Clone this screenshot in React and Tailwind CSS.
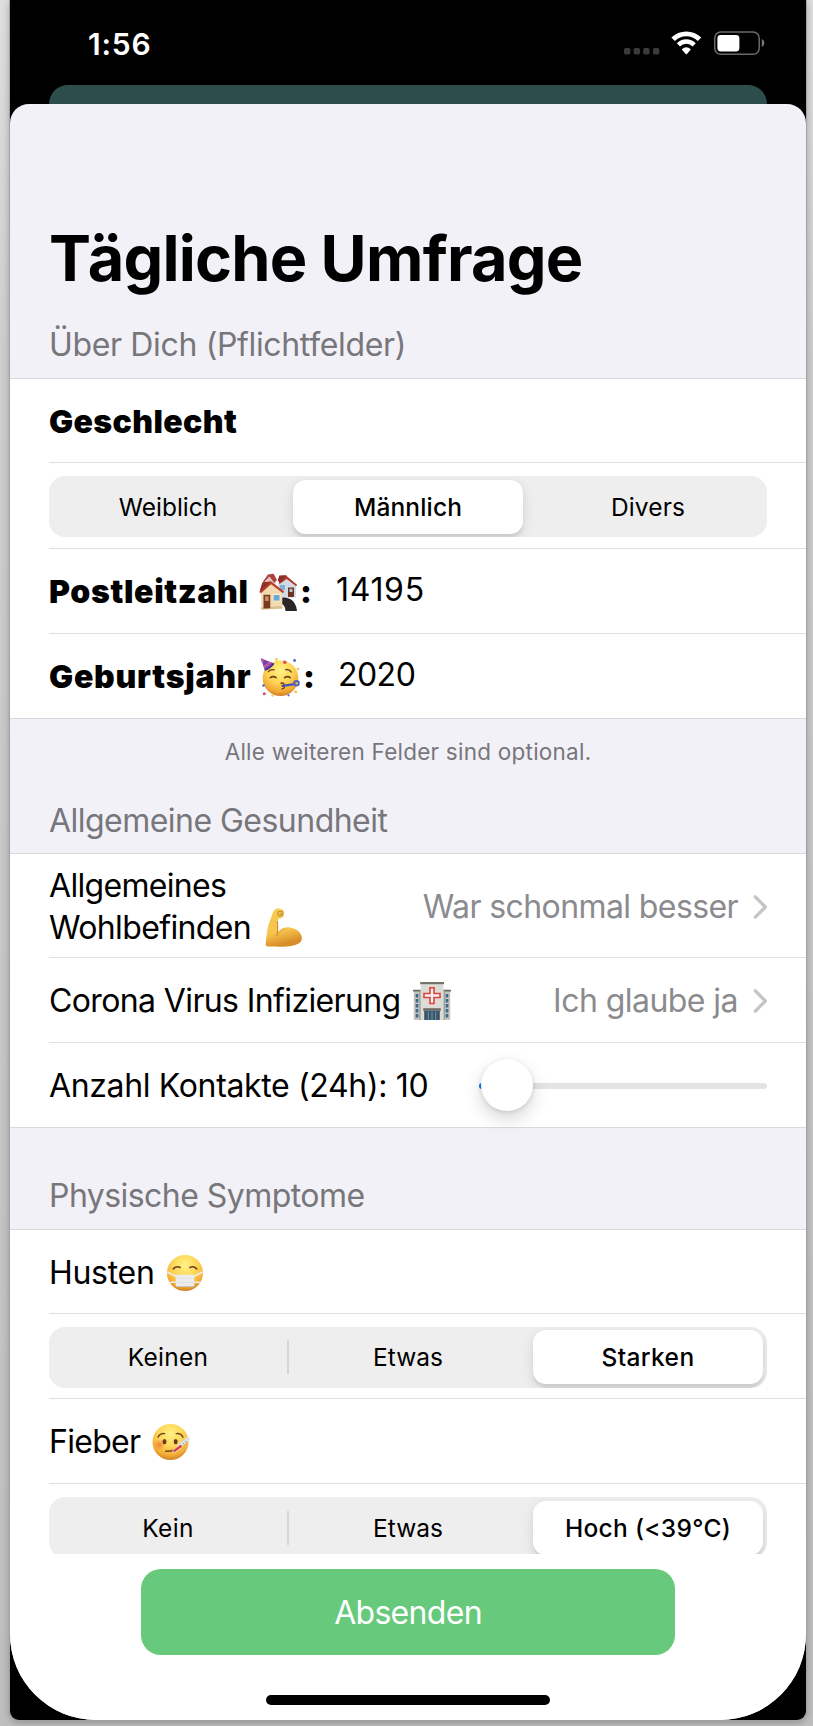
import clsx from "clsx";

/* ---------- Status bar ---------- */

function StatusIcons() {
  return (
    <svg width="160" height="45" viewBox="0 0 160 45" fill="none">
      <g fill="#3b3b3b">
        <rect x="14" y="28" width="6.4" height="6.5" rx="1.8" />
        <rect x="23.6" y="28" width="6.4" height="6.5" rx="1.8" />
        <rect x="33.2" y="28" width="6.4" height="6.5" rx="1.8" />
        <rect x="42.9" y="28" width="6.4" height="6.5" rx="1.8" />
      </g>
      <path d="M63.1 19.3a18.7 18.7 0 0 1 26.4 0" stroke="#fff" strokeWidth="4.9" />
      <path d="M68.4 24.8a11.2 11.2 0 0 1 15.8 0" stroke="#fff" strokeWidth="4.5" />
      <path d="M72.2 28.9a5.8 5.8 0 0 1 8.2 0 .9.9 0 0 1 0 1.2l-3.5 3.9a.8.8 0 0 1-1.2 0l-3.5-3.9a.9.9 0 0 1 0-1.2z" fill="#fff" />
      <rect x="104.7" y="12" width="44.5" height="22.2" rx="6" stroke="#6a6a6a" strokeWidth="1.5" />
      <rect x="107.4" y="15" width="22" height="16.4" rx="3.4" fill="#fff" />
      <path d="M151.8 19v8c1.6-.7 2.5-2.2 2.5-4s-.9-3.3-2.5-4z" fill="#777" />
    </svg>
  );
}

/* ---------- Emoji drawings ---------- */

function Houses({ className }) {
  return (
    <svg className={className} viewBox="0 0 38 40">
      <path d="M5 9h12v12H5z" fill="#ead9d6" />
      <path d="M7.5 11h4v5h-4z" fill="#9db8cf" />
      <path d="M4 9.6 9 2.4l5.6-.6L18 8l-3 3-5-6-5 5.500z" fill="#a8423a" />
      <path d="M10.500 4.500 6 10.500h9z" fill="#e2c4be" />
      <path d="M19 12 28.500 5 37 12v13.500H19z" fill="#d3dae4" />
      <path d="M21 13h5v5h-5z" fill="#7fb0d8" />
      <path d="M29 15.500h6V25h-6z" fill="#6f3220" />
      <path d="M30.500 16.800h3v3.200h-3z" fill="#a9c9dd" />
      <path d="m27 3.500 11 9.200-.8 1.500-9.500-7.200-7.200 5-1.600-4.600L20.500 4z" fill="#b0372b" />
      <path d="m20.400 3.400 7.400-.1-6.600 7.400-2.300-2z" fill="#8d3128" />
      <path d="M22.500 25.800c8.500-1.200 14.600 3.700 15.500 13.200H26.500c-.3-4-1.600-6.200-4-7z" fill="#2b2526" />
      <path d="M2.200 20.500 12 11l11.300 9.500V37L2.200 37.600z" fill="#f2dbb1" />
      <path d="M2.200 35.200 23.300 34v2.600l-21.100 1z" fill="#d9c092" />
      <path d="M4.500 22.800h6.800v13.400l-6.800.4z" fill="#7b3a1f" />
      <path d="M6 24.300h3.700v4.600H6z" fill="#c9936a" />
      <path d="M13.800 22.200h7.600v7.200h-7.600z" fill="#fff3d8" />
      <path d="M14.600 23h6v5.600h-6z" fill="#6aa7d9" />
      <path d="m12.200 9.600 13 9.900-1.200 1.700L12 12.300 2 21.300.500 20.200 3.300 11.200z" fill="#bd3d2d" />
      <path d="m3.400 10.300 8.800-.9L.6 20.100z" fill="#8f3127" />
    </svg>
  );
}

function FaceGradient({ id }) {
  return (
    <radialGradient id={id} cx="50%" cy="28%" r="72%">
      <stop offset="0" stopColor="#fff287" />
      <stop offset="0.5" stopColor="#fdd455" />
      <stop offset="0.82" stopColor="#f3ab34" />
      <stop offset="1" stopColor="#cf8126" />
    </radialGradient>
  );
}

function PartyFace({ className }) {
  return (
    <svg className={className} viewBox="0 0 40 40">
      <defs><FaceGradient id="faceParty" /></defs>
      <circle cx="20.500" cy="21.200" r="17.800" fill="url(#faceParty)" />
      <path d="M.800 1.200 14.500 6.800c-2 3-6 5.500-9.600 6.400z" fill="#6a45b5" />
      <path d="m.800 1.200 4.400 1.800-3.200 3zM8.600 4.400l3 1.200C10 8.200 7.200 10 4 10.700L3.200 8.200c2.200-.600 4.200-1.800 5.400-3.800z" fill="#c2569e" />
      <path d="M13.500 6.400c-1.800 3.300-5 5.600-9 6.800" fill="none" stroke="#453083" strokeWidth="1.300" />
      <g fill="none" stroke="#70401a" strokeWidth="1.400" strokeLinecap="round">
        <path d="M8.300 14.600c1.500-1.800 3.500-2.300 5.600-1.800M25.700 12.600c2.200-.300 4.200.5 5.500 2.400" />
        <path d="M10.300 20.700c1.500-1.500 4.300-1.500 5.800 0M24.500 20.700c1.500-1.500 4.300-1.500 5.800 0" strokeWidth="1.600" />
        <path d="M21 26.200c2.800-.600 4 .900 1.600 2.400 2.600.6 2.300 2.900-.600 3.300" />
      </g>
      <path d="m22.800 28.900 11.500-1.700" stroke="#4352b7" strokeWidth="2.200" strokeLinecap="round" />
      <circle cx="36.500" cy="26.200" r="2.300" fill="none" stroke="#5662bf" strokeWidth="2" />
      <g fill="#5662cb"><circle cx="34.600" cy="3.500" r="1.400" /><circle cx="3.500" cy="28.500" r="1.300" /><circle cx="28.500" cy="38.300" r="1.100" /></g>
      <g fill="#d64c60"><circle cx="24.800" cy="5.300" r="1.700" /><circle cx="4.300" cy="36.800" r="1.500" /></g>
      <g fill="#f6c752"><circle cx="16.500" cy="2.300" r="1.400" /><circle cx="38" cy="12" r="1.400" /><circle cx="35.800" cy="34.800" r="1.500" /><circle cx="12.500" cy="38.600" r="1.200" /></g>
    </svg>
  );
}

function Muscle({ className }) {
  return (
    <svg className={className} viewBox="0 0 38 40">
      <defs>
        <linearGradient id="arm" x1="0" y1="0" x2="0.25" y2="1">
          <stop offset="0" stopColor="#f8cb4c" />
          <stop offset="0.65" stopColor="#f8c44c" />
          <stop offset="1" stopColor="#d78d28" />
        </linearGradient>
      </defs>
      <path d="M7.800 4.700C8.600 2.200 10.900.600 13.400.600c2.600.100 4.600.9 5.200 2.200.500 1.500.5 3.900 0 5.200-.700 1.500-2.300 2.300-4.200 2.300l-2 2c.500 4.900.600 9.500.1 12.300 3.200-4 7.300-5.600 12-5.200 7 .7 12.400 5.300 12.400 10.900 0 3.700-3.100 5.700-7.500 6.900-5.800 1.500-13.900 1.800-20.500 1.400-3.100-.200-5.400.1-7.200-.4-1.200-.4-1-2-.9-3.300.3-4.800 1-9 1.800-14 .900-5.700 3.500-10.700 5.200-16.200z" fill="url(#arm)" />
      <path d="M12.300 13.200c.600 4.900.5 9.700-.2 14.300" fill="none" stroke="#c0802d" strokeWidth="1" strokeLinecap="round" />
      <path d="M12.200 27c1.500-3.200 4.400-5.300 7.600-6.200" fill="none" stroke="#dfa136" strokeWidth="1" />
      <path d="M13 3.900c1.500-.6 3.700-.5 5.200.2M13.300 7.900c1.500.3 3.100 0 4.500-.9M15 5.900l2.600-.1M12.700 4.800c-.2.800 0 1.600.4 2.300" fill="none" stroke="#a8742b" strokeWidth=".8" strokeLinecap="round" />
    </svg>
  );
}

function Hospital({ className }) {
  return (
    <svg className={className} viewBox="0 0 38 40">
      <path d="M.800 9.500h36.400V39H.800z" fill="#c7c4be" />
      <path d="M0 8.700h8v1.700H0zM30 8.700h8v1.700h-8z" fill="#6b6863" />
      <path d="M6.300 9.500h1.400V39H6.300zM30.500 9.500h1.400V39h-1.400z" fill="#9c9993" />
      <path d="M7.700 2h22.800v37H7.700z" fill="#dddbd6" />
      <path d="M7.200 1h23.800v2.200H7.200z" fill="#77736d" />
      <path d="M10.200 27.200h17.600v2.600H10.200z" fill="#6f6a66" />
      <path d="M11.200 29.800h15.600V39H11.200z" fill="#39566c" />
      <path d="M15.300 30.500V39M19 30.500V39M22.700 30.500V39" stroke="#86a2b4" strokeWidth=".8" />
      <path d="M17 6.700h4v5.800h6v4h-6v6h-4v-6h-6v-4h6z" fill="#f6f0ee" stroke="#da4141" strokeWidth="1.600" />
      <path d="M4 13v25M34 13v25" stroke="#386d91" strokeWidth="2.700" strokeDasharray="3.600 1.400" />
    </svg>
  );
}

function MaskFace({ className }) {
  return (
    <svg className={className} viewBox="0 0 38 38">
      <defs><FaceGradient id="faceMask" /></defs>
      <circle cx="19" cy="19" r="18" fill="url(#faceMask)" />
      <g fill="none" stroke="#6b421c" strokeWidth="1.700" strokeLinecap="round">
        <path d="M7.300 14.800c2-2.100 4.500-2.500 6.800-1.400M23.900 13.400c2.300-1.100 4.800-.7 6.800 1.400" />
      </g>
      <path d="M1.300 18 10 22.200M36.700 18 28 22.200M3 28.500l7.500-.6M35 28.500l-7.500-.6" stroke="#f0eeec" strokeWidth="1.500" />
      <rect x="9.700" y="20.800" width="18.600" height="12" rx="1.500" fill="#edecec" />
      <path d="M10.300 24.500h17.400M10.300 28.500h17.400" stroke="#dddbdc" strokeWidth=".7" />
      <path d="M10.200 32.600h17.600" stroke="#bfb8b3" strokeWidth=".8" />
    </svg>
  );
}

function FeverFace({ className }) {
  return (
    <svg className={className} viewBox="0 0 38 38">
      <defs>
        <FaceGradient id="faceFever" />
        <radialGradient id="blush"><stop offset="0" stopColor="#f0663b" stopOpacity=".7" /><stop offset="1" stopColor="#f0663b" stopOpacity="0" /></radialGradient>
      </defs>
      <circle cx="18.500" cy="19" r="18" fill="url(#faceFever)" />
      <circle cx="7.500" cy="21.500" r="5.800" fill="url(#blush)" />
      <g fill="none" stroke="#76481c" strokeWidth="1.400" strokeLinecap="round">
        <path d="M6 14.300c1.200-2.600 3.800-4 6.700-3.700M24.300 10.600c2.900-.3 5.500 1.100 6.700 3.700" />
        <path d="M14 28.200c2.500.2 5-.1 7.800-1" strokeWidth="1.700" />
      </g>
      <ellipse cx="12.500" cy="18.600" rx="2" ry="2.700" fill="#6b3e18" />
      <ellipse cx="23.700" cy="18.600" rx="2" ry="2.700" fill="#6b3e18" />
      <path d="m22.300 28 5.500-3.900" stroke="#e5e2e2" strokeWidth="3.600" strokeLinecap="round" />
      <path d="m27.300 23 8.300-7" stroke="#dedde2" strokeWidth="4.200" strokeLinecap="round" />
      <path d="m22.400 27.900 6.200-4.600" stroke="#dc3a40" strokeWidth="2.400" strokeLinecap="round" />
      <path d="m31 20 1.400 1.700M33.300 18.200l1.300 1.700" stroke="#8c8c96" strokeWidth=".8" />
    </svg>
  );
}

/* ---------- Form parts ---------- */

function Chevron() {
  return (
    <svg className="-mr-px ml-3.5 h-[26px] w-4 shrink-0" viewBox="0 0 16 26" fill="none" stroke="#c5c5c7" strokeWidth="3.400" strokeLinecap="round" strokeLinejoin="round">
      <path d="m3.300 2.900 10 10.100-10 10.100" />
    </svg>
  );
}

function Segmented({ options, selected }) {
  return (
    <div className="grid h-[61px] w-[718px] shrink-0 grid-cols-[240px_240px_240px] justify-center overflow-hidden rounded-[16px] bg-[#eeeeee] text-[24.5px]">
      {options.map(({ label, tracking }, i) => (
        <div
          key={label}
          className={clsx(
            "relative flex items-center justify-center",
            i > 0 && selected !== i && selected !== i - 1 &&
              "before:absolute before:-left-px before:top-[13.5px] before:h-[34px] before:w-[2px] before:bg-[#d5d5d7]"
          )}
        >
          <div
            className={clsx(
              "flex h-[54px] w-[230px] items-center justify-center",
              tracking,
              i === selected && "rounded-[13px] bg-white font-[550] shadow-[0_4px_12px_rgba(0,0,0,0.12),0_4px_2px_rgba(0,0,0,0.05)]"
            )}
          >
            {label}
          </div>
        </div>
      ))}
    </div>
  );
}

function Row({ className, children }) {
  return <div className={clsx("flex items-center border-[#dfdfe0] pr-[39px] pt-[2px]", className)}>{children}</div>;
}

function List({ className, children }) {
  return <section className={clsx("border-[#d9d9dd] bg-white pl-[39px]", className)}>{children}</section>;
}

function Slider() {
  return (
    <div className="relative ml-auto h-[6px] w-[288px] rounded-full bg-[#e4e4e6]">
      <div className="h-full w-5 rounded-full bg-[#0a7aff]" />
      <div className="absolute left-[2px] top-[-24px] size-[52px] rounded-full bg-white shadow-[0_8px_18px_rgba(0,0,0,0.16),0_1px_4px_rgba(0,0,0,0.12)]" />
    </div>
  );
}

export default function App() {
  return (
    <div className="h-[1726px] w-[813px] overflow-hidden bg-linear-to-b from-[#dfdfdf] via-[#cfcfcf] via-20% to-[#bfbfbf] pl-[10px] font-['Inter','Liberation_Sans',sans-serif] text-[32px] leading-[40px] text-black">
      <div className="flex h-[1720px] w-[796px] flex-col overflow-hidden rounded-b-[9px] bg-black shadow-[0_0_0_1px_#a3a3a3,0_2px_8px_rgba(0,0,0,0.3)]">
        <header className="flex h-[85px] shrink-0 items-start justify-between pl-[78px] pr-[36px] text-white">
          <span className="mt-6 text-[30px] font-semibold tracking-[0.8px]">1:56</span>
          <span className="mt-5"><StatusIcons /></span>
        </header>
        <div className="mx-[39px] -mb-[21px] h-10 shrink-0 rounded-t-[19px] bg-[#2d4c4c]" />

        <main className="z-10 flex flex-1 flex-col overflow-hidden rounded-b-[86px] rounded-t-[19px] bg-[#f2f1f7]">
          <div className="flex h-[274px] shrink-0 flex-col justify-end pb-[13px] pl-[39px]">
            <h1 className="mb-[29px] text-[63px] font-bold leading-[76px] tracking-[-0.8px]">Tägliche Umfrage</h1>
            <h2 className="tracking-[-0.35px] text-[#77767b]">Über Dich (Pflichtfelder)</h2>
          </div>

          <List className="border-y">
            <Row className="h-[84px] border-b font-black tracking-[0.4px]">Geschlecht</Row>
            <Row className="h-[86px] border-b">
              <Segmented
                selected={1}
                options={[
                  { label: "Weiblich", tracking: "" },
                  { label: "Männlich", tracking: "tracking-[0.15px]" },
                  { label: "Divers", tracking: "tracking-[0.15px]" },
                ]}
              />
            </Row>
            <Row className="h-[85px] border-b">
              <span className="w-[201px] whitespace-nowrap font-black tracking-[0.65px]">Postleitzahl</span>
              <Houses className="ml-[9px] h-10 w-[38px]" />
              <span className="ml-[3px] font-black">:</span>
              <span className="ml-6 pb-[4px] tracking-[0.7px]">14195</span>
            </Row>
            <Row className="h-[84px]">
              <span className="w-[204px] whitespace-nowrap font-black tracking-[0.75px]">Geburtsjahr</span>
              <PartyFace className="ml-[7px] size-10" />
              <span className="ml-[3px] font-black">:</span>
              <span className="ml-[23px] pb-[4px] tracking-[-0.51px]">2020</span>
            </Row>
          </List>

          <div className="flex h-[134px] shrink-0 flex-col justify-between pb-[12px] pt-[17px] text-[#77767b]">
            <p className="text-center text-[22.5px] leading-8 tracking-[0.24px]">Alle weiteren Felder sind optional.</p>
            <h2 className="pl-[39px] tracking-[-0.53px]">Allgemeine Gesundheit</h2>
          </div>

          <List className="border-y">
            <Row className="h-[104px] justify-between border-b">
              <div className="leading-[42px]">
                <div className="tracking-[-0.68px]">Allgemeines</div>
                <div className="flex h-[42px]">
                  <span className="tracking-[-0.64px]">Wohlbefinden</span>
                  <Muscle className="ml-[14px] mt-px h-10 w-[38px]" />
                </div>
              </div>
              <span className="ml-auto tracking-[-0.6px] text-[#8b8b8f]">War schonmal besser</span>
              <Chevron />
            </Row>
            <Row className="h-[85px] border-b">
              <span className="tracking-[-0.62px]">Corona Virus Infizierung</span>
              <Hospital className="ml-3 h-10 w-[38px]" />
              <span className="ml-auto tracking-[-0.55px] text-[#8b8b8f]">Ich glaube ja</span>
              <Chevron />
            </Row>
            <Row className="h-[84px]">
              <span className="tracking-[-0.35px]">Anzahl Kontakte (24h): 10</span>
              <Slider />
            </Row>
          </List>

          <div className="flex h-[101px] shrink-0 items-end pb-[13px] pl-[39px] text-[#77767b]">
            <h2 className="tracking-[-0.55px]">Physische Symptome</h2>
          </div>

          <List className="border-t">
            <Row className="h-[84px] border-b">
              <span className="tracking-[-0.3px]">Husten</span>
              <MaskFace className="ml-[11px] size-[38px]" />
            </Row>
            <Row className="h-[85px] border-b">
              <Segmented
                selected={2}
                options={[
                  { label: "Keinen", tracking: "tracking-[0.25px]" },
                  { label: "Etwas", tracking: "" },
                  { label: "Starken", tracking: "tracking-[0.4px]" },
                ]}
              />
            </Row>
            <Row className="h-[85px] border-b">
              <span className="tracking-[-0.71px]">Fieber</span>
              <FeverFace className="ml-[12px] size-[38px]" />
            </Row>
            <div className="h-[70px] overflow-hidden pt-[13px]">
              <Segmented
                selected={2}
                options={[
                  { label: "Kein", tracking: "tracking-[0.35px]" },
                  { label: "Etwas", tracking: "" },
                  { label: "Hoch (<39°C)", tracking: "tracking-[0.3px]" },
                ]}
              />
            </div>
          </List>

          <footer className="flex flex-1 flex-col items-center bg-white pt-[15px]">
            <button className="h-[86px] w-[534px] rounded-[20px] bg-[#66c97c] pt-[2px] tracking-[-0.7px] text-white">Absenden</button>
            <div className="mt-10 h-[10px] w-[284px] rounded-full bg-black" />
          </footer>
        </main>
      </div>
    </div>
  );
}
